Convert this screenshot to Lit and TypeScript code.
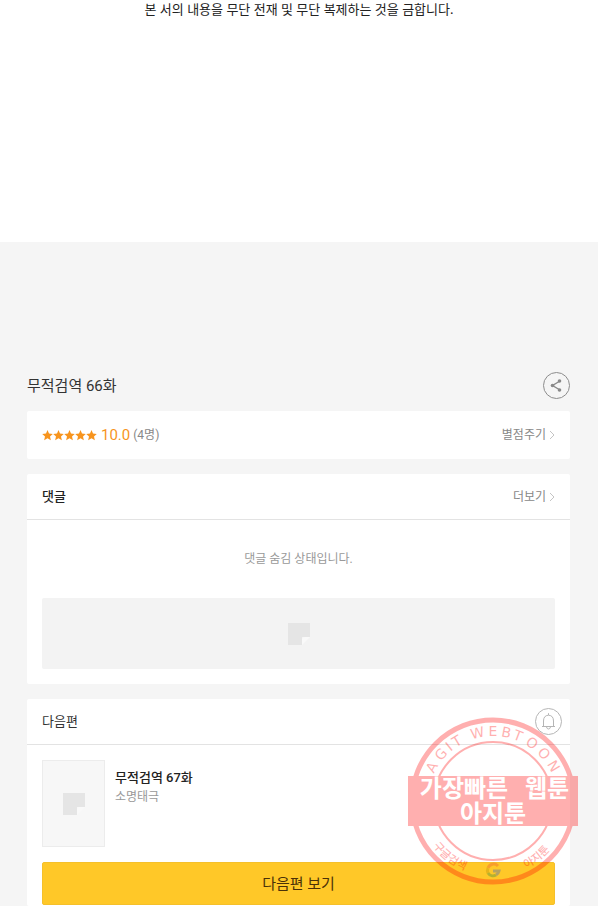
import { LitElement, css, html, svg } from "lit";
import { customElement, property } from "lit/decorators.js";

const chevron = html`<svg class="chevron" width="6" height="10" viewBox="0 0 6 10" aria-hidden="true">
  <path d="M1 1 L5 5 L1 9" fill="none" stroke="#c4c4c4" stroke-width="1" />
</svg>`;

@customElement("star-rating")
export class StarRating extends LitElement {
  @property({ type: Number }) stars = 5;

  static styles = css`
    :host {
      display: flex;
    }
  `;

  render() {
    return Array.from(
      { length: this.stars },
      () => html`<svg width="11" height="11" viewBox="0 0 22 22" aria-hidden="true">
        <path
          fill="#f7941d"
          d="M11 0 L14 7 L21.500 7.800 L16 13 L17.700 20.500 L11 16.500 L4.300 20.500 L6 13 L0.500 7.800 L8 7 Z"
        />
      </svg>`
    );
  }
}

@customElement("blank-note")
export class BlankNote extends LitElement {
  static styles = css`
    :host {
      display: flex;
    }
  `;

  render() {
    return html`<svg width="22" height="22" viewBox="0 0 22 22" aria-hidden="true">
      <path d="M0 0 H22 V14 H14 V22 H0 Z" fill="#e5e5e5" />
      <path d="M14 22 V17 Q14 14 17 14 H22 Z" fill="#f9f9f9" />
    </svg>`;
  }
}

/** Round promotional stamp laid over the next-episode card. */
@customElement("promo-stamp")
export class PromoStamp extends LitElement {
  static styles = css`
    :host {
      display: block;
    }
    .stamp {
      display: block;
      opacity: 0.31;
    }
    .latin {
      font: 14px "DejaVu Sans", sans-serif;
      fill: #f00;
      text-anchor: middle;
    }
    .banner {
      font: 700 24px "Noto Sans CJK KR", sans-serif;
      fill: #fff;
      text-anchor: middle;
    }
    .rim {
      font: 500 11px "Noto Sans CJK KR", sans-serif;
      fill: #f00;
      text-anchor: middle;
    }
  `;

  private letters: [string, number][] = [
    ["A", -61],
    ["G", -48],
    ["I", -39],
    ["T", -31],
    ["W", -13],
    ["E", 0],
    ["B", 11],
    ["T", 21],
    ["O", 34],
    ["O", 47],
    ["N", 60],
  ];

  render() {
    return html`<svg class="stamp" width="170" height="168" viewBox="0 0 170 168">
      <circle cx="85" cy="84" r="81" fill="none" stroke="#f00" stroke-width="5" />
      <circle cx="85" cy="84" r="59" fill="none" stroke="#f00" stroke-width="2" />
      ${this.letters.map(
        ([letter, angle]) =>
          svg`<text class="latin" x="85" y="19" transform="rotate(${angle} 85 84)">${letter}</text>`
      )}
      <rect y="59" width="170" height="50" fill="#f00" />
      <text class="banner" x="56" y="80">가장빠른</text>
      <text class="banner" x="139" y="80">웹툰</text>
      <text class="banner" x="85" y="105">아지툰</text>
      <path id="rim" d="M10 84 A75 75 0 0 0 160 84" fill="none" />
      <text class="rim"><textPath href="#rim" startOffset="29%">구글검색</textPath></text>
      <text class="rim"><textPath href="#rim" startOffset="71%">아지툰</textPath></text>
      <g fill="none" stroke-width="3">
        <path d="M90 149 A6 6 0 0 0 80 151" stroke="#ea4335" />
        <path d="M80 151 A6 6 0 0 0 80 156" stroke="#b08a00" />
        <path d="M80 156 A6 6 0 0 0 88 158" stroke="#168040" />
        <path d="M88 158 A6 6 0 0 0 91 154 H85" stroke="#1a50e0" />
      </g>
    </svg>`;
  }
}

@customElement("app-root")
export class AppRoot extends LitElement {
  static styles = css`
    :host {
      display: flex;
      flex-direction: column;
      min-height: 100vh;
      background: #f5f5f5;
      color: #333;
      font-family: Roboto, "Noto Sans CJK KR", sans-serif;
      font-size: 13px;
      line-height: 20px;
    }
    * {
      box-sizing: border-box;
    }
    h1,
    h2,
    h3,
    p {
      margin: 0;
      font-size: 13px;
      font-weight: 400;
    }
    button {
      margin: 0;
      padding: 0;
      font: inherit;
      cursor: pointer;
    }
    .page-end {
      height: 242px;
      background: #fff;
      color: #222;
      font-family: "Noto Sans", "Noto Sans CJK KR", sans-serif;
      line-height: 18px;
      text-align: center;
    }
    .viewer {
      flex: 1;
      display: flex;
      flex-direction: column;
      gap: 15px;
      padding: 130px 28px 0 27px;
    }
    .title-row {
      display: flex;
      align-items: center;
      justify-content: space-between;
      margin-bottom: -3px;
    }
    .title-row h1 {
      font-size: 15px;
    }
    .round {
      display: flex;
      border: 0;
      background: none;
    }
    .card {
      background: #fff;
      border-radius: 2px;
    }
    .rating {
      display: flex;
      align-items: center;
      height: 48px;
      padding: 0 15px;
    }
    .score {
      margin: 0 3px 0 4px;
      color: #f7941d;
      font-size: 15px;
    }
    .count {
      color: #888;
      font-size: 12px;
    }
    .more {
      display: flex;
      align-items: center;
      gap: 3px;
      margin-left: auto;
      color: #888;
      font-size: 12px;
      text-decoration: none;
    }
    .head {
      display: flex;
      align-items: center;
      height: 46px;
      padding: 0 15px;
      border-bottom: 1px solid #e3e3e3;
    }
    .head .strong,
    .info h3 {
      font-weight: 500;
      color: #222;
    }
    .head .round {
      margin: 0 -7px 0 auto;
    }
    .body {
      padding: 29px 15px 15px;
    }
    .hidden-note {
      color: #999;
      font-size: 12px;
      text-align: center;
    }
    .ad {
      display: flex;
      align-items: center;
      justify-content: center;
      height: 71px;
      margin-top: 29px;
      background: #f3f3f3;
      border-radius: 2px;
    }
    .next {
      position: relative;
      flex: 1;
    }
    .next-body {
      padding: 15px 15px 1px;
    }
    .episode {
      display: flex;
      gap: 10px;
      color: inherit;
      text-decoration: none;
    }
    .thumb {
      display: flex;
      align-items: center;
      justify-content: center;
      width: 63px;
      height: 87px;
      border: 1px solid #ececec;
      background: #f7f7f7;
    }
    .info {
      padding-top: 8px;
    }
    .info p {
      color: #999;
      font-size: 12px;
      line-height: 18px;
    }
    .go {
      display: block;
      width: 100%;
      height: 43px;
      margin-top: 15px;
      border: 1px solid #f5c02b;
      border-radius: 2px;
      background: #ffc828;
      color: #4a3108;
      font-size: 15px;
    }
    .seal {
      position: absolute;
      top: 18px;
      right: -8px;
      pointer-events: none;
    }
  `;

  render() {
    return html`
      <section class="page-end"><p>본 서의 내용을 무단 전재 및 무단 복제하는 것을 금합니다.</p></section>
      <main class="viewer">
        <div class="title-row">
          <h1>무적검역 66화</h1>
          <button class="round" aria-label="공유">
            <svg width="27" height="27" viewBox="0 0 27 27">
              <circle cx="13.500" cy="13.500" r="13" fill="none" stroke="#8c8c8c" />
              <path d="M17 9 L9.500 13.500 L17 18" fill="none" stroke="#888" stroke-width="1.400" />
              <circle cx="16.500" cy="9" r="1.800" fill="#888" />
              <circle cx="9.500" cy="13.500" r="1.800" fill="#888" />
              <circle cx="16.500" cy="18" r="1.800" fill="#888" />
            </svg>
          </button>
        </div>

        <section class="card rating">
          <star-rating stars="5"></star-rating>
          <span class="score">10.0</span>
          <span class="count">(4명)</span>
          <a class="more" href="#rate">별점주기 ${chevron}</a>
        </section>

        <section class="card">
          <header class="head">
            <h2 class="strong">댓글</h2>
            <a class="more" href="#comments">더보기 ${chevron}</a>
          </header>
          <div class="body">
            <p class="hidden-note">댓글 숨김 상태입니다.</p>
            <div class="ad"><blank-note></blank-note></div>
          </div>
        </section>

        <section class="card next">
          <header class="head">
            <h2>다음편</h2>
            <button class="round" aria-label="알림">
              <svg width="27" height="27" viewBox="0 0 27 27">
                <circle cx="13.500" cy="13.500" r="13" fill="none" stroke="#b5b5b5" />
                <path
                  d="M7 18.500 H20 M8.500 18.500 V13 Q8.500 7.500 13.500 7.200 Q18.500 7.500 18.500 13 V18.500 M13.500 7 V5.200 M11.500 19 Q12 21 13.500 21 Q15 21 15.500 19"
                  fill="none"
                  stroke="#b5b5b5"
                />
              </svg>
            </button>
          </header>
          <div class="next-body">
            <a class="episode" href="#next">
              <span class="thumb"><blank-note></blank-note></span>
              <div class="info">
                <h3>무적검역 67화</h3>
                <p>소명태극</p>
              </div>
            </a>
            <button class="go">다음편 보기</button>
          </div>
          <promo-stamp class="seal"></promo-stamp>
        </section>
      </main>
    `;
  }
}
